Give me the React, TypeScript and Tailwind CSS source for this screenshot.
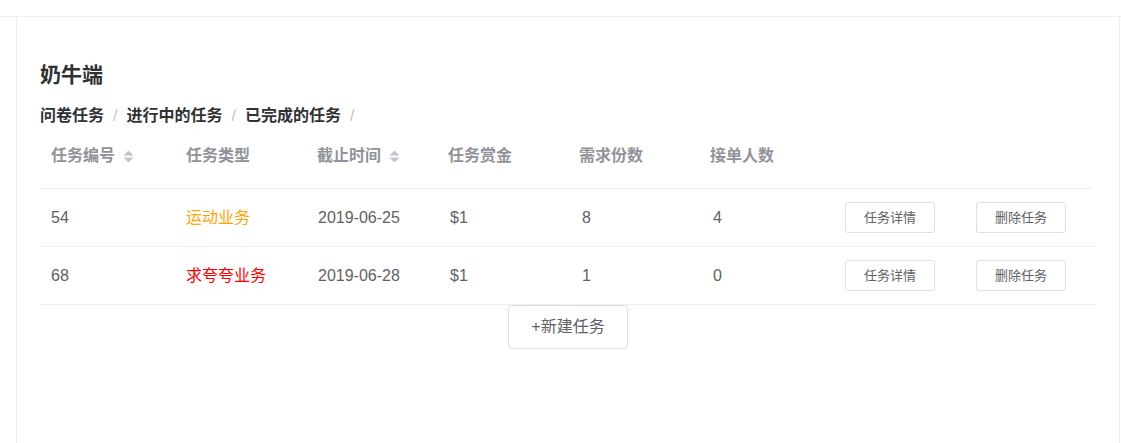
import React from 'react';

const font = { fontFamily: '"Liberation Sans", "Noto Sans CJK SC", sans-serif' };

type Task = { id: number; type: string; typeClass: string; deadline: string; reward: string; need: number; taken: number };

const tasks: Task[] = [
    { id: 54, type: '运动业务', typeClass: 'text-[#ffa500]', deadline: '2019-06-25', reward: '$1', need: 8, taken: 4 },
    { id: 68, type: '求夸夸业务', typeClass: 'text-[#ff0000]', deadline: '2019-06-28', reward: '$1', need: 1, taken: 0 },
];

const cols = 'grid grid-cols-[135px_131px_131px_131px_131px_135px_131px_1fr]';

const SortCaret = () => (
    <svg width="11" height="15" viewBox="0 0 11 15" className="ml-[8px] shrink-0">
        <path d="M0.5 6.5 L5.5 1.5 L10.5 6.5 Z" fill="#c0c4cc" />
        <path d="M0.5 8.5 L5.5 13.5 L10.5 8.5 Z" fill="#c0c4cc" />
    </svg>
);

export default function App() {
    return (
        <div className="w-[1121px] h-[443px] bg-white overflow-hidden" style={font}>
            <div className="h-[17px] border-b border-[#ebeef5]" />
            <div className="ml-[16px] w-[1104px] h-[426px] border-l border-r border-[#ebeef5] bg-white pl-[23px] pt-[44px]">
                <div className="text-[21px] leading-[28px] font-bold text-[#303133]">奶牛端</div>

                <div className="mt-[15px] flex items-center text-[16px] leading-[24px] font-semibold text-[#303133]">
                    <span>问卷任务</span>
                    <span className="mx-[9px] text-[#c0c4cc] font-normal">/</span>
                    <span>进行中的任务</span>
                    <span className="mx-[9px] text-[#c0c4cc] font-normal">/</span>
                    <span>已完成的任务</span>
                    <span className="mx-[9px] text-[#c0c4cc] font-normal">/</span>
                </div>

                <div className="w-[1056px]">
                    {/* header */}
                    <div className={`${cols} mr-[4px] pt-[16px] pb-[20px] border-b border-[#ebeef5] text-[16px] leading-[24px] font-bold text-[#909399]`}>
                        <div className="pl-[11px] flex items-center">任务编号<SortCaret /></div>
                        <div className="pl-[11px]">任务类型</div>
                        <div className="pl-[11px] flex items-center">截止时间<SortCaret /></div>
                        <div className="pl-[11px]">任务赏金</div>
                        <div className="pl-[11px]">需求份数</div>
                        <div className="pl-[11px]">接单人数</div>
                        <div />
                        <div />
                    </div>

                    {/* rows */}
                    {tasks.map((t) => (
                        <div key={t.id} className={`${cols} h-[58px] items-center border-b border-[#ebeef5] text-[16px] text-[#606266]`}>
                            <div className="pl-[11px]">{t.id}</div>
                            <div className={`pl-[11px] ${t.typeClass}`}>{t.type}</div>
                            <div className="pl-[12px]">{t.deadline}</div>
                            <div className="pl-[13px]">{t.reward}</div>
                            <div className="pl-[14px]">{t.need}</div>
                            <div className="pl-[14px]">{t.taken}</div>
                            <div className="pl-[11px]">
                                <button className="w-[90px] h-[31px] border border-[#dcdfe6] rounded-[3px] bg-white text-[13px] text-[#606266]">任务详情</button>
                            </div>
                            <div className="pl-[11px]">
                                <button className="w-[90px] h-[31px] border border-[#dcdfe6] rounded-[3px] bg-white text-[13px] text-[#606266]">删除任务</button>
                            </div>
                        </div>
                    ))}

                    <div className="flex justify-center">
                        <button className="w-[120px] h-[44px] border border-[#dcdfe6] rounded-[4px] bg-white text-[16px] text-[#606266]">+新建任务</button>
                    </div>
                </div>
            </div>
        </div>
    );
}
